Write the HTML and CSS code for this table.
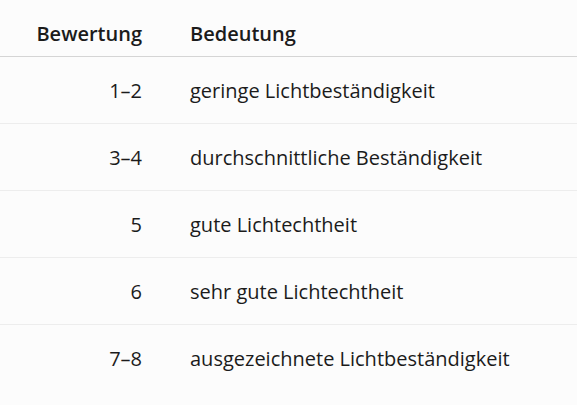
FILE: index.html
```html
<!DOCTYPE html>
<html lang="de">
<head>
<meta charset="utf-8">
<title>Lichtechtheit</title>
<link rel="stylesheet" href="styles.css">
</head>
<body>
<table class="rating-table">
  <thead>
    <tr>
      <th class="col-num">Bewertung</th>
      <th class="col-text">Bedeutung</th>
    </tr>
  </thead>
  <tbody>
    <tr><td class="col-num">1–2</td><td class="col-text">geringe Lichtbeständigkeit</td></tr>
    <tr><td class="col-num">3–4</td><td class="col-text">durchschnittliche Beständigkeit</td></tr>
    <tr><td class="col-num">5</td><td class="col-text">gute Lichtechtheit</td></tr>
    <tr><td class="col-num">6</td><td class="col-text">sehr gute Lichtechtheit</td></tr>
    <tr><td class="col-num">7–8</td><td class="col-text">ausgezeichnete Lichtbeständigkeit</td></tr>
  </tbody>
</table>
</body>
</html>
```
FILE: styles.css
```css
html, body {
  margin: 0;
  padding: 0;
  background: #fcfcfc;
}
body {
  font-family: "Open Sans", "Noto Sans", sans-serif;
  font-size: 20px;
  color: #1b1b1b;
}
.rating-table {
  width: 100%;
  border-collapse: collapse;
}
.rating-table th {
  font-weight: 600;
  font-size: 20px;
  line-height: 24px;
  padding: 22px 24px 10px;
  border-bottom: 1px solid #d5d5d5;
  text-align: left;
}
.rating-table td {
  line-height: 24px;
  padding: 22px 24px 20px;
  border-bottom: 1px solid #ededed;
}
.rating-table tbody tr:last-child td {
  border-bottom: none;
}
.rating-table .col-num {
  width: 118px;
  text-align: right;
}
.rating-table .col-text {
  text-align: left;
}
```
